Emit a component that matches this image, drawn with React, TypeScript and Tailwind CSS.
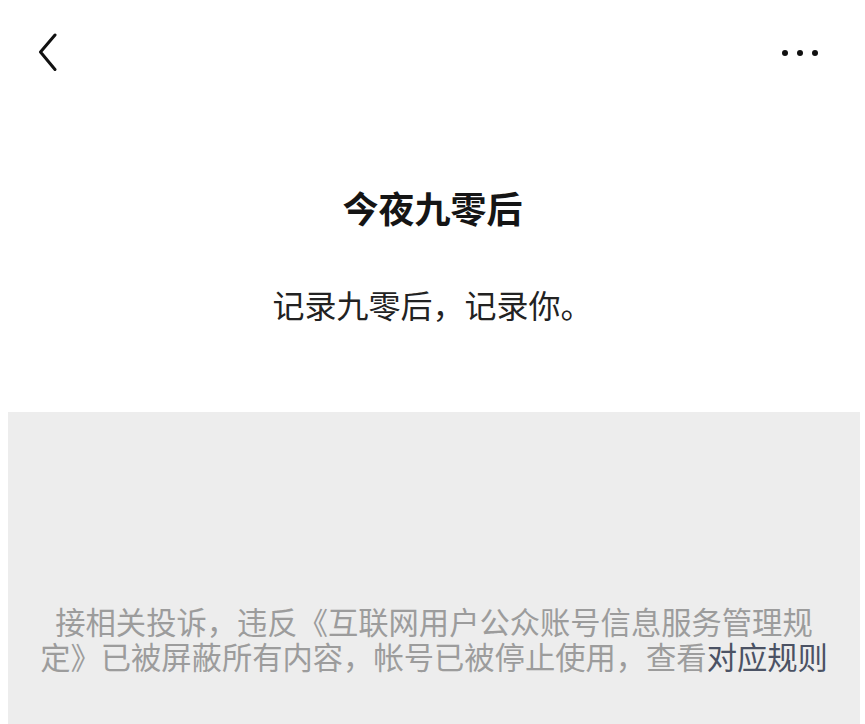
import React from "react";

export default function App() {
  const font = { fontFamily: '"Noto Sans CJK SC", "Noto Sans", sans-serif' };
  return (
    <div className="min-h-[724px] h-[724px] w-full bg-white flex flex-col overflow-hidden" style={font}>
      <div className="h-[106px] flex items-center justify-between pl-[38px] pr-[47px] shrink-0">
        <svg width="20" height="40" viewBox="0 0 20 40" fill="none">
          <path d="M17 2 L2.5 19 L17 36.5" stroke="#111" strokeWidth="3" strokeLinecap="round" strokeLinejoin="round" />
        </svg>
        <div className="flex items-center gap-[9px]">
          <span className="block w-[6px] h-[6px] rounded-full bg-[#111]" />
          <span className="block w-[6px] h-[6px] rounded-full bg-[#111]" />
          <span className="block w-[6px] h-[6px] rounded-full bg-[#111]" />
        </div>
      </div>
      <div className="mt-[76px] h-[50px] leading-[50px] text-center text-[36px] font-bold text-[#151515]">今夜九零后</div>
      <div className="mt-[52px] h-[40px] leading-[40px] text-center text-[32px] text-[#222]">记录九零后，记录你。</div>
      <div className="mt-[88px] ml-[8px] mr-[5px] flex-1 bg-[#ededed] pt-[192px] text-center text-[30.3px] leading-[35px] text-[#9c9c9c]">
        <div className="whitespace-nowrap">接相关投诉，违反《互联网用户公众账号信息服务管理规</div>
        <div className="whitespace-nowrap">
          定》已被屏蔽所有内容，帐号已被停止使用，查看<span className="text-[#4b5264]">对应规则</span>
        </div>
      </div>
    </div>
  );
}
